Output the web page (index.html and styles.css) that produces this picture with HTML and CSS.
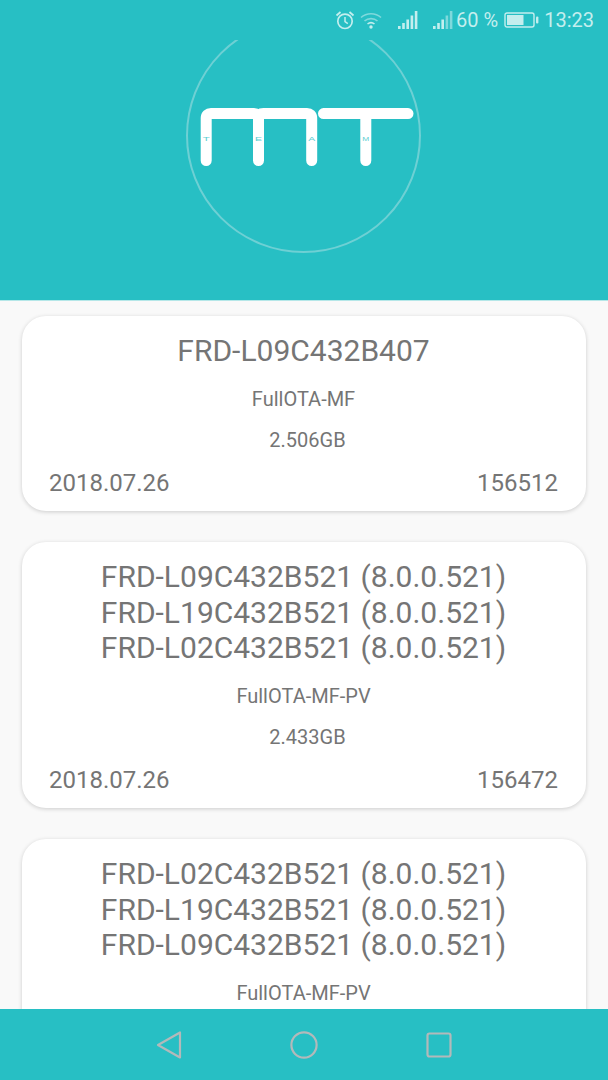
FILE: index.html
```html
<!DOCTYPE html>
<html>
<head>
    <title>MT Team</title>
    <link rel="stylesheet" href="styles.css">
</head>
<body>
    <div class="header">
        <div class="status-bar">
            <svg class="icon-alarm" width="20" height="20" viewBox="0 0 20 20">
                <circle cx="10" cy="11.3" r="7.2" fill="none" stroke="#c4eeee" stroke-width="1.7"/>
                <path d="M10 7v4.6l2.8 2" fill="none" stroke="#c4eeee" stroke-width="1.5"/>
                <path d="M1.5 5.5L5.5 2M18.5 5.5L14.5 2" fill="none" stroke="#c4eeee" stroke-width="1.8"/>
            </svg>
            <svg class="icon-wifi" width="22" height="20" viewBox="0 0 22 20">
                <path d="M1 7.5C6.5 2.5 15.5 2.5 21 7.5" fill="none" stroke="#7fd9dc" stroke-width="1.6"/>
                <path d="M4.5 11C8 7.8 14 7.8 17.5 11" fill="none" stroke="#7fd9dc" stroke-width="1.6"/>
                <path d="M7.5 14C9.5 12.4 12.5 12.4 14.5 14" fill="none" stroke="#c4eeee" stroke-width="1.6"/>
                <circle cx="11" cy="17" r="1.7" fill="#c4eeee"/>
            </svg>
            <svg class="icon-signal" width="20" height="20" viewBox="0 0 20 20">
                <rect x="0" y="16" width="2.6" height="3" fill="#c4eeee"/>
                <rect x="4.2" y="13" width="2.6" height="6" fill="#c4eeee"/>
                <rect x="8.4" y="9.5" width="2.6" height="9.5" fill="#c4eeee"/>
                <rect x="12.6" y="5.5" width="2.6" height="13.5" fill="#c4eeee"/>
                <rect x="16.8" y="1" width="2.6" height="18" fill="#c4eeee"/>
            </svg>
            <svg class="icon-signal2" width="20" height="20" viewBox="0 0 20 20">
                <rect x="0" y="16" width="2.6" height="3" fill="#c4eeee"/>
                <rect x="4.2" y="13" width="2.6" height="6" fill="#c4eeee"/>
                <rect x="8.4" y="9.5" width="2.6" height="9.5" fill="#c4eeee"/>
                <rect x="12.6" y="5.5" width="2.6" height="13.5" fill="#7fd9dc"/>
                <rect x="16.8" y="1" width="2.6" height="18" fill="#7fd9dc"/>
            </svg>
            <span class="status-text percent">60 %</span>
            <svg class="icon-battery" width="35" height="16" viewBox="0 0 35 16">
                <rect x="1" y="1" width="29" height="14" rx="2" fill="none" stroke="#c4eeee" stroke-width="1.4"/>
                <rect x="3" y="3" width="16.5" height="10" fill="#c4eeee"/>
                <rect x="32" y="4.5" width="2.4" height="7" rx="1" fill="#c4eeee"/>
            </svg>
            <span class="status-text time">13:23</span>
        </div>
        <svg class="logo" width="608" height="220" viewBox="0 40 608 220">
            <circle cx="303.5" cy="135.5" r="116.5" fill="none" stroke="#6ed0d4" stroke-width="2"/>
            <path d="M206.2 160.6V118Q206.2 113.6 211 113.6H253.5Q258.5 113.6 258.5 118V160.6" fill="none" stroke="#fff" stroke-width="11" stroke-linecap="round"/>
            <path d="M258.5 118Q258.5 113.6 263.5 113.6H307Q311.7 113.6 311.7 118V160.6" fill="none" stroke="#fff" stroke-width="11" stroke-linecap="round"/>
            <path d="M323.5 113.6H408M365.8 113.6V160.6" fill="none" stroke="#fff" stroke-width="11" stroke-linecap="round"/>
            <g class="logo-letters">
                <text x="202.7" y="140.7" textLength="7" lengthAdjust="spacingAndGlyphs">T</text>
                <text x="255" y="140.7" textLength="7" lengthAdjust="spacingAndGlyphs">E</text>
                <text x="308.2" y="140.7" textLength="7" lengthAdjust="spacingAndGlyphs">A</text>
                <text x="362.3" y="140.7" textLength="7" lengthAdjust="spacingAndGlyphs">M</text>
            </g>
        </svg>
    </div>

    <div class="list">
        <div class="card">
            <div class="card-title">FRD-L09C432B407</div>
            <div class="card-type">FullOTA-MF</div>
            <div class="card-size">2.506GB</div>
            <div class="card-footer">
                <span>2018.07.26</span>
                <span>156512</span>
            </div>
        </div>
        <div class="card">
            <div class="card-title">FRD-L09C432B521 (8.0.0.521)<br>FRD-L19C432B521 (8.0.0.521)<br>FRD-L02C432B521 (8.0.0.521)</div>
            <div class="card-type">FullOTA-MF-PV</div>
            <div class="card-size">2.433GB</div>
            <div class="card-footer">
                <span>2018.07.26</span>
                <span>156472</span>
            </div>
        </div>
        <div class="card card-cut">
            <div class="card-title">FRD-L02C432B521 (8.0.0.521)<br>FRD-L19C432B521 (8.0.0.521)<br>FRD-L09C432B521 (8.0.0.521)</div>
            <div class="card-type">FullOTA-MF-PV</div>
        </div>
    </div>

    <div class="nav-bar">
        <svg width="26" height="30" viewBox="0 0 26 30">
            <path d="M2 15L24 2.5V27.5Z" fill="none" stroke="#b3b9ba" stroke-width="2.2" stroke-linejoin="round"/>
        </svg>
        <svg width="28" height="28" viewBox="0 0 28 28">
            <circle cx="14" cy="14" r="12.6" fill="none" stroke="#b3b9ba" stroke-width="2.2"/>
        </svg>
        <svg width="26" height="26" viewBox="0 0 26 26">
            <rect x="1.5" y="1.5" width="23" height="23" rx="2" fill="none" stroke="#b3b9ba" stroke-width="2.2"/>
        </svg>
    </div>
</body>
</html>
```

FILE: styles.css
```css
body {
    margin: 0;
    height: 1080px;
    overflow: hidden;
    display: flex;
    flex-direction: column;
    background-color: #f9f9f9;
    color: #757575;
    font-family: Roboto, sans-serif;
}

.header {
    height: 301px;
    flex-shrink: 0;
    background-color: #27bfc4;
    border-bottom: 1px solid #b5e7e8;
    box-sizing: border-box;
}

.status-bar {
    height: 40px;
    display: flex;
    align-items: center;
    justify-content: flex-end;
    padding-right: 14px;
    box-sizing: border-box;
    color: #c4eeee;
}

.status-text {
    font-size: 20px;
}

.icon-alarm {
    margin-right: 5px;
}

.icon-wifi {
    margin-right: 16px;
}

.icon-signal {
    margin-right: 15px;
}

.percent {
    margin-left: 3px;
    margin-right: 6px;
}

.time {
    margin-left: 5px;
}

.logo {
    display: block;
}

.logo-letters text {
    font-family: "Liberation Sans", sans-serif;
    font-size: 5.6px;
    fill: #5fcfd3;
}

.list {
    flex: 1;
    overflow: hidden;
    padding: 15px 22px 0;
}

.card {
    background-color: #fff;
    border-radius: 24px;
    box-shadow: 0 1px 4px rgba(0, 0, 0, 0.18);
    padding: 17px 28px 15.4px 27px;
    margin-bottom: 31px;
    text-align: center;
}

.card-cut {
    padding-bottom: 60px;
}

.card-title {
    font-size: 30px;
    line-height: 35.6px;
}

.card-type,
.card-size {
    font-size: 20px;
    line-height: 24px;
}

.card-type {
    margin-top: 18px;
}

.card-size {
    margin-top: 17px;
    padding-left: 8px;
}

.card-footer {
    display: flex;
    justify-content: space-between;
    margin-top: 18px;
    font-size: 24px;
    line-height: 26px;
}

.nav-bar {
    height: 71px;
    flex-shrink: 0;
    background-color: #27bfc4;
    display: flex;
    align-items: center;
    justify-content: center;
    gap: 108px;
}
```
